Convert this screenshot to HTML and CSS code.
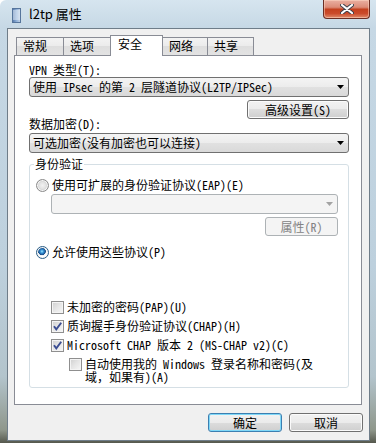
FILE: index.html
```html
<!DOCTYPE html>
<html lang="zh-CN">
<head>
    <meta charset="UTF-8">
    <meta name="viewport" content="width=device-width, initial-scale=1.0">
    <title>l2tp 属性</title>
    <link rel="stylesheet" href="styles.css">
</head>
<body>

    <div class="window">
        <!-- Barra de título -->
        <div class="titlebar">
            <svg class="title-icon" width="9" height="15" viewBox="0 0 9 15">
                <defs>
                    <linearGradient id="ig" x1="0" y1="0" x2="1" y2="0">
                        <stop offset="0" stop-color="#5577aa"/>
                        <stop offset="0.5" stop-color="#8fb0d8"/>
                        <stop offset="1" stop-color="#c8d6e6"/>
                    </linearGradient>
                </defs>
                <rect x="0.5" y="0.5" width="8" height="14" fill="url(#ig)" stroke="#56759c"/>
                <g stroke="#eef4fa" stroke-width="1">
                    <line x1="1" y1="3" x2="8" y2="3"/>
                    <line x1="1" y1="5" x2="8" y2="5"/>
                    <line x1="1" y1="7" x2="8" y2="7"/>
                    <line x1="1" y1="9" x2="8" y2="9"/>
                    <line x1="1" y1="11" x2="8" y2="11"/>
                </g>
            </svg>
            <span class="title-text">l2tp 属性</span>
            <div class="close-btn">
                <svg width="14" height="10" viewBox="0 0 14 10">
                    <path d="M2 1 L12 9 M12 1 L2 9" stroke="#3d3f4a" stroke-width="4" stroke-linecap="round"/>
                    <path d="M2 1 L12 9 M12 1 L2 9" stroke="#ffffff" stroke-width="2.2" stroke-linecap="round"/>
                </svg>
            </div>
        </div>

        <!-- Área do cliente -->
        <div class="client">
            <div class="tabs">
                <div class="tab tab-a">常规</div>
                <div class="tab tab-b">选项</div>
                <div class="tab tab-c selected">安全</div>
                <div class="tab tab-d">网络</div>
                <div class="tab tab-e">共享</div>
            </div>

            <div class="panel">
                <div class="label">VPN 类型(T):</div>
                <div class="combo">
                    <span>使用 IPsec 的第 2 层隧道协议(L2TP/IPSec)</span>
                    <svg class="arrow" width="7" height="4" viewBox="0 0 7 4"><polygon points="0,0 7,0 3.5,4" fill="#000"/></svg>
                </div>
                <button class="btn btn-adv">高级设置(S)</button>

                <div class="label label-enc">数据加密(D):</div>
                <div class="combo combo-enc">
                    <span>可选加密(没有加密也可以连接)</span>
                    <svg class="arrow" width="7" height="4" viewBox="0 0 7 4"><polygon points="0,0 7,0 3.5,4" fill="#000"/></svg>
                </div>

                <!-- Grupo de autenticação -->
                <div class="group">
                    <div class="legend">身份验证</div>

                    <div class="opt radio-eap"><span class="radio"></span>使用可扩展的身份验证协议(EAP)(E)</div>
                    <div class="combo combo-disabled">
                        <span></span>
                        <svg class="arrow" width="7" height="4" viewBox="0 0 7 4"><polygon points="0,0 7,0 3.5,4" fill="#a3a3a3"/></svg>
                    </div>
                    <button class="btn btn-disabled btn-props" disabled>属性(R)</button>

                    <div class="opt radio-allow"><span class="radio checked"></span>允许使用这些协议(P)</div>

                    <div class="opt check-row first"><span class="check"></span>未加密的密码(PAP)(U)</div>
                    <div class="opt check-row"><span class="check checked"><svg width="13" height="13" viewBox="0 0 13 13"><path d="M3 6.2 L5.3 9.4 L10.2 2.8" fill="none" stroke="#3b4d92" stroke-width="1.9"/></svg></span>质询握手身份验证协议(CHAP)(H)</div>
                    <div class="opt check-row"><span class="check checked"><svg width="13" height="13" viewBox="0 0 13 13"><path d="M3 6.2 L5.3 9.4 L10.2 2.8" fill="none" stroke="#3b4d92" stroke-width="1.9"/></svg></span>Microsoft CHAP 版本 2 (MS-CHAP v2)(C)</div>
                    <div class="opt check-row sub"><span class="check"></span><span class="wrap">自动使用我的 Windows 登录名称和密码(及<br>域，如果有)(A)</span></div>
                </div>
            </div>

            <div class="dialog-buttons">
                <button class="btn btn-default">确定</button>
                <button class="btn">取消</button>
            </div>
        </div>
    </div>

</body>
</html>
```

FILE: styles.css
```css
/* Janela de propriedades estilo Windows 7 */
body {
    margin: 0;
    padding: 0;
    font-family: "Noto Sans Mono CJK SC", "Noto Sans CJK SC", "Liberation Mono", monospace;
    font-size: 12px;
    color: #000;
}

.window {
    width: 376px;
    height: 443px;
    overflow: hidden;
    border-top-left-radius: 6px;
    background: linear-gradient(180deg, #d6e5ef 0px, #c6d8e5 28px, #bdd0dd 60%, #b3c4cc 85%, #8f978b 97%, #55584d 100%);
}

/* Barra de título */
.titlebar {
    height: 28px;
    display: flex;
    align-items: flex-start;
}

.title-icon {
    margin: 8px 0 0 12px;
}

.title-text {
    font-family: "Noto Sans CJK SC", sans-serif;
    font-size: 13px;
    line-height: 16px;
    margin: 6px 0 0 8px;
}

.close-btn {
    margin-left: auto;
    margin-right: 6px;
    width: 47px;
    height: 19px;
    box-sizing: border-box;
    border: 1px solid #6b2e24;
    border-top: none;
    border-radius: 0 0 4px 4px;
    background: linear-gradient(180deg, #eab0a2 0%, #dc8c78 40%, #c4411f 52%, #cb4b2b 75%, #e08b6c 100%);
    box-shadow: inset 0 0 0 1px rgba(255, 220, 200, 0.5);
    display: flex;
    align-items: center;
    justify-content: center;
}

/* Área do cliente */
.client {
    margin-left: 7px;
    width: 363px;
    height: 413px;
    box-sizing: border-box;
    border: 1px solid #6f7d89;
    background-color: #f0f0f0;
    padding: 6px 6px 0 6px;
}

/* Abas */
.tabs {
    display: flex;
    align-items: flex-end;
    height: 20px;
    margin-left: 2px;
    font-family: "Noto Sans CJK SC", sans-serif;
}

.tab {
    height: 18px;
    box-sizing: border-box;
    border: 1px solid #898c95;
    border-bottom: none;
    padding-left: 6px;
    line-height: 16px;
    background: linear-gradient(180deg, #f3f3f3 0%, #ebebeb 50%, #dedede 50%, #e3e3e3 100%);
    margin-left: -1px;
}

.tab-a { width: 48px; margin-left: 0; }
.tab-b { width: 48px; }
.tab-c { width: 53px; }
.tab-d { width: 46px; }
.tab-e { width: 47px; }

.tab.selected {
    height: 21px;
    margin-bottom: -1px;
    background: #fff;
    position: relative;
    line-height: 15px;
    padding-left: 7px;
}

.panel {
    width: 348px;
    height: 350px;
    box-sizing: border-box;
    border: 1px solid #898c95;
    background-color: #fff;
    padding: 7px 12px 0 14px;
    display: flex;
    flex-direction: column;
    align-items: flex-start;
}

.label {
    height: 14px;
    line-height: 14px;
    white-space: nowrap;
}

.label-enc {
    margin-top: -2px;
}

/* Caixas de combinação */
.combo {
    width: 320px;
    height: 20px;
    box-sizing: border-box;
    border: 1px solid #707070;
    border-radius: 3px;
    background: linear-gradient(180deg, #f4f4f4 0%, #ececec 50%, #e1e1e1 50%, #d9d9d9 100%);
    display: flex;
    align-items: center;
    padding: 0 4px 0 3px;
    line-height: 18px;
    white-space: nowrap;
}

.combo span {
    flex: 1;
}

.combo-enc {
    margin-top: 2px;
}

.combo-disabled {
    width: 287px;
    margin: 2px 0 0 15px;
    border-color: #adb2b5;
    background: #f4f4f4;
}

/* Botões */
.btn {
    font: inherit;
    height: 19px;
    box-sizing: border-box;
    border: 1px solid #707070;
    border-radius: 3px;
    background: linear-gradient(180deg, #f2f2f2 0%, #ebebeb 50%, #dddddd 50%, #cfcfcf 100%);
    box-shadow: inset 0 0 0 1px #fbfbfb;
    color: #000;
    padding: 0;
    line-height: 17px;
    text-align: center;
}

.btn-adv {
    width: 102px;
    margin: 3px 0 0 218px;
}

.btn-disabled {
    border-color: #adb2b5;
    background: #f4f4f4;
    box-shadow: none;
    color: #838383;
}

.btn-props {
    width: 73px;
    margin-top: 3px;
    align-self: flex-end;
}

/* Grupo "身份验证" */
.group {
    width: 320px;
    height: 224px;
    box-sizing: border-box;
    margin-top: 11px;
    border: 1px solid #d5dfe5;
    border-radius: 3px;
    padding: 0 10px 0 6px;
    display: flex;
    flex-direction: column;
    align-items: flex-start;
}

.legend {
    margin: -8px 0 0 -2px;
    padding: 0 1px;
    height: 14px;
    line-height: 14px;
    background-color: #fff;
}

.opt {
    display: flex;
    align-items: center;
    height: 14px;
    line-height: 14px;
    white-space: nowrap;
}

.radio-eap {
    margin-top: 7px;
}

.radio-allow {
    margin-top: 9px;
}

.radio {
    width: 13px;
    height: 13px;
    box-sizing: border-box;
    border-radius: 50%;
    border: 1px solid #8a8a8a;
    background: radial-gradient(circle at 50% 50%, #f2f2f2 0, #e4e4e4 3px, #cfcfcf 5px);
    box-shadow: inset 0 0 0 1px #f6f6f6;
    margin-right: 3px;
    flex: none;
}

.radio.checked {
    border-color: #2a5d85;
    background: radial-gradient(circle at 45% 40%, #9ee3ff 0, #3a9ad8 1.5px, #1c5ba0 3px, #1c4f86 3.6px, #e8eef2 4px, #ffffff 5px);
}

.check-row {
    margin: 5px 0 0 15px;
}

.check-row.first {
    margin-top: 41px;
}

.check {
    width: 13px;
    height: 13px;
    box-sizing: border-box;
    border: 1px solid #8f8f8f;
    background: linear-gradient(135deg, #cfcfcf 0%, #e6e6e6 50%, #f7f7f7 100%);
    box-shadow: inset 0 0 0 1px #f4f4f4;
    margin-right: 3px;
    flex: none;
    position: relative;
}

.check svg {
    position: absolute;
    left: -1px;
    top: -1px;
}

.check-row.sub {
    margin-left: 33px;
    height: auto;
    align-items: flex-start;
    margin-top: 5px;
}

.check-row.sub .check {
    margin-top: 1px;
}

.wrap {
    line-height: 13px;
}

/* Botões do diálogo */
.dialog-buttons {
    display: flex;
    justify-content: flex-end;
    gap: 7px;
    margin-top: 8px;
}

.dialog-buttons .btn {
    width: 74px;
}

.btn-default {
    border-color: #3c7fb1;
    box-shadow: inset 0 0 0 1px #7fd8f8;
}
```
